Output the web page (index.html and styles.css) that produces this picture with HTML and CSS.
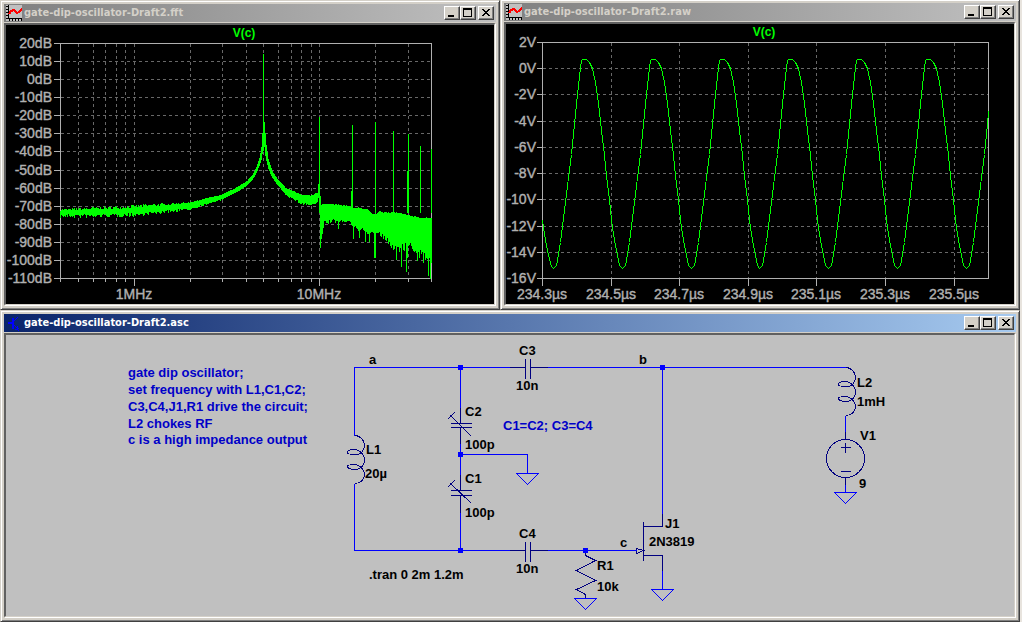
FILE: index.html
```
<!DOCTYPE html>
<html lang="en">
<head>
<meta charset="utf-8">
<title>gate-dip-oscillator-Draft2</title>
<link rel="stylesheet" href="styles.css">
</head>
<body>
<main class="workspace">
  <section class="window" aria-label="FFT">
    <header class="titlebar">
      <svg class="app-icon" viewBox="0 0 16 16" aria-hidden="true"><use href="#plot-icon"/></svg>
      <h2 class="title">gate-dip-oscillator-Draft2.fft</h2>
      <div class="controls">
        <button class="ctl" aria-label="Minimize"><svg viewBox="0 0 12 10"><use href="#min"/></svg></button>
        <button class="ctl" aria-label="Maximize"><svg viewBox="0 0 12 10"><use href="#max"/></svg></button>
        <button class="ctl close" aria-label="Close"><svg viewBox="0 0 12 10"><use href="#close"/></svg></button>
      </div>
    </header>
    <div class="client plot-area"><svg class="drawing" id="fft" viewBox="6 25 488 279" role="img" aria-label="Spectrum of V(c)"></svg></div>
  </section>

  <section class="window flush-top" aria-label="Waveform">
    <header class="titlebar">
      <svg class="app-icon" viewBox="0 0 16 16" aria-hidden="true"><use href="#plot-icon"/></svg>
      <h2 class="title">gate-dip-oscillator-Draft2.raw</h2>
      <div class="controls">
        <button class="ctl" aria-label="Minimize"><svg viewBox="0 0 12 10"><use href="#min"/></svg></button>
        <button class="ctl" aria-label="Maximize"><svg viewBox="0 0 12 10"><use href="#max"/></svg></button>
        <button class="ctl close" aria-label="Close"><svg viewBox="0 0 12 10"><use href="#close"/></svg></button>
      </div>
    </header>
    <div class="client plot-area"><svg class="drawing" id="wave" viewBox="506 24 508 280" role="img" aria-label="V(c) over time"></svg></div>
  </section>

  <section class="window wide" aria-label="Schematic">
    <header class="titlebar active">
      <svg class="app-icon" viewBox="0 0 16 16" aria-hidden="true">
        <path class="icon-blue" d="M2 7h4v2H2zM6 3h2v11H6zM8 5h1v1H8zM9 4h1v1H9zM10 3h1v1h-1zM11 2h1v1h-1zM8 10h1v1H8zM9 11h1v1H9zM10 12h1v1h-1zM11 11h1v2h1v1h-1v1H9v-1h2zM12 15h1v1h-1z"/>
      </svg>
      <h2 class="title">gate-dip-oscillator-Draft2.asc</h2>
      <div class="controls">
        <button class="ctl" aria-label="Minimize"><svg viewBox="0 0 12 10"><use href="#min"/></svg></button>
        <button class="ctl" aria-label="Maximize"><svg viewBox="0 0 12 10"><use href="#max"/></svg></button>
        <button class="ctl close" aria-label="Close"><svg viewBox="0 0 12 10"><use href="#close"/></svg></button>
      </div>
    </header>
    <div class="client schematic">
      <svg class="drawing" viewBox="6 335 1008 281" role="img" aria-label="Gate dip oscillator circuit">
        <defs>
          <path id="coil" d="M0 0C6 0 10 5 10 10C10 15 6 20 0 19C-5 19 -7 18 -7 17C-7 15 -4 14 0 14C5 14 10 19 10 24C10 29 7 34 0 34C-5 34 -7 32 -7 31C-7 29 -4 29 0 29C5 29 10 34 10 39C10 44 6 48 0 48"/>
          <path id="gnd" d="M-11 0H11L0 11Z"/>
        </defs>
        <g transform="translate(.5 .5)">
          <g class="part">
            <use href="#coil" x="354" y="435"/>
            <use href="#coil" x="845" y="367"/>
            <path d="M460 407V423M450 423H471M450 427H471M460 427V443M447 419L454 412M450 415L471 436"/>
            <path d="M460 474V490M450 490H471M450 495H471M460 495V512M447 487L454 480M450 483L471 503"/>
            <path d="M509 367H525M525 358V378M530 358V378M530 367H547"/>
            <path d="M509 550H525M525 541V561M530 541V561M530 550H547"/>
            <path d="M585 550V555L595 560L576 570L595 580L576 589L585 594V598"/>
            <path d="M643 521V560M643 526H662V513M643 555H662V570M636 548L643 550L636 553Z"/>
            <circle cx="845" cy="458" r="19"/>
            <path d="M845 431V439M845 477V484M840 447H850M845 442V452M840 471H850"/>
          </g>
          <g class="wire">
            <path d="M509 367H354V435M354 483V550H509M547 367H845M547 550H636"/>
            <path d="M460 367V407M460 443V474M460 512V550M460 454H527V473"/>
            <path d="M662 367V513M662 570V589M845 415V431M845 484V492"/>
            <use href="#gnd" x="527" y="473"/>
            <use href="#gnd" x="585" y="598"/>
            <use href="#gnd" x="662" y="589"/>
            <use href="#gnd" x="845" y="492"/>
          </g>
        </g>
        <path class="node" d="M458 365h5v5h-5zM458 452h5v5h-5zM458 548h5v5h-5zM583 548h5v5h-5zM660 365h5v5h-5z"/>
        <g class="label">
          <text x="369" y="364">a</text><text x="639" y="364">b</text><text x="620" y="547">c</text>
          <text x="519" y="355">C3</text><text x="516" y="390">10n</text>
          <text x="465" y="416">C2</text><text x="465" y="449">100p</text>
          <text x="465" y="483">C1</text><text x="465" y="517">100p</text>
          <text x="366" y="454">L1</text><text x="365" y="478">20µ</text>
          <text x="519" y="538">C4</text><text x="516" y="573">10n</text>
          <text x="597" y="570">R1</text><text x="597" y="591">10k</text>
          <text x="665" y="528">J1</text><text x="649" y="546">2N3819</text>
          <text x="857" y="387">L2</text><text x="857" y="406">1mH</text>
          <text x="860" y="440">V1</text><text x="859" y="488">9</text>
          <text x="369" y="579">.tran 0 2m 1.2m</text>
        </g>
        <g class="label comment">
          <text x="128" y="377">gate dip oscillator;</text>
          <text x="128" y="394">set frequency with L1,C1,C2;</text>
          <text x="128" y="411">C3,C4,J1,R1 drive the circuit;</text>
          <text x="128" y="428">L2 chokes RF</text>
          <text x="128" y="444">c is a high impedance output</text>
          <text x="503" y="430">C1=C2; C3=C4</text>
        </g>
      </svg>
    </div>
  </section>
</main>

<svg class="symbols" aria-hidden="true">
  <symbol id="plot-icon" viewBox="0 0 16 16">
    <path fill="#c0c0c0" d="M0 0h16v16H0z"/>
    <path fill="#000" d="M2 0h1v14H2zM2 13h14v1H2zM0 1h2v1H0zM0 4h2v1H0zM0 7h2v1H0zM0 10h2v1H0zM0 13h2v1H0zM3 14h1v2H3zM6 14h1v2H6zM9 14h1v2H9zM12 14h1v2h-1zM15 14h1v2h-1z"/>
    <path fill="none" stroke="#f00" stroke-width="2" d="M3 9L5 6L8 5L11 8L13 7L16 4"/>
  </symbol>
  <symbol id="min" viewBox="0 0 12 10"><path d="M2 7h6v2H2z"/></symbol>
  <symbol id="max" viewBox="0 0 12 10"><path fill-rule="evenodd" d="M1 0h9v9H1zM2 2v6h7V2z"/></symbol>
  <symbol id="close" viewBox="0 0 12 10"><path d="M2 1h2v1h1v1h2V2h1V1h2v1H9v1H8v1H7v1h1v1h1v1h1v1H8V7H7V6H5v1H4v1H2V7h1V6h1V5h1V4H4V3H3V2H2z"/></symbol>
</svg>
<script src="plots.js"></script>
</body>
</html>
```
FILE: styles.css
```
* { box-sizing: border-box; }
body { margin: 0; background: #e8e4de; font-family: "DejaVu Sans Condensed", "Noto Sans", sans-serif; }
.workspace { display: grid; grid-template-columns: 500fr 520fr; padding-right: 2px; border-bottom: 1px solid #808080; }
.wide { grid-column: 1 / -1; }
.window {
  background: #d4d0c8;
  border: 1px solid;
  border-color: #d4d0c8 #404040 #404040 #d4d0c8;
  box-shadow: inset 1px 1px #fff, inset -1px -1px #808080;
  padding: 3px;
}
.flush-top { border-top-width: 0; }
.titlebar {
  display: flex;
  align-items: center;
  gap: 2px;
  height: 18px;
  margin-bottom: 1px;
  padding: 0 2px;
  color: #d4d0c8;
  background: linear-gradient(to right, #808080, #c0c0c0);
}
.titlebar.active { color: #fff; background: linear-gradient(to right, #0a246a, #a6caf0); }
.app-icon { width: 16px; height: 16px; flex: none; shape-rendering: crispEdges; }
.icon-blue { fill: #00f; }
.title { flex: 1; margin: 0; font-size: 11px; line-height: 18px; font-weight: 700; white-space: nowrap; }
.controls { display: flex; }
.ctl {
  width: 16px;
  height: 14px;
  padding: 0;
  background: #d4d0c8;
  border: 1px solid;
  border-color: #fff #404040 #404040 #fff;
  box-shadow: inset -1px -1px #808080;
}
.ctl svg { display: block; width: 12px; height: 10px; margin: 1px; shape-rendering: crispEdges; }
.close { margin-left: 2px; }
.client {
  border: solid;
  border-width: 2px 1px 1px 2px;
  border-color: #606060 #d4d0c8 #d4d0c8 #606060;
  box-shadow: 1px 1px #fff;
  margin: 0 1px 1px 0;
}
.plot-area { background: #000; }
.schematic { background: #c0c0c0; }
.drawing { display: block; width: 100%; height: auto; font-family: "Liberation Sans", sans-serif; font-weight: 700; }
.wire, .part { fill: none; stroke-width: 1; shape-rendering: crispEdges; }
.wire { stroke: #00f; }
.part { stroke: #000080; }
.node { fill: #00f; shape-rendering: crispEdges; }
.label { font-size: 13px; fill: #000; }
.comment { fill: #0000c8; }
.grid { fill: none; stroke: #686868; stroke-dasharray: 3 3; shape-rendering: crispEdges; }
.axis { fill: none; stroke: #b0b0b0; shape-rendering: crispEdges; }
.trace { fill: none; stroke: #0f0; shape-rendering: crispEdges; }
.tick { font-size: 14px; font-weight: 400; fill: #b0b0b0; stroke: #b0b0b0; stroke-width: 0.4; }
.tick-y { text-anchor: end; }
.tick-x, .trace-name { text-anchor: middle; }
.trace-name { font-size: 12px; fill: #0f0; }
.symbols { position: absolute; width: 0; height: 0; }
```
FILE: plots.js
```
const NS = "http://www.w3.org/2000/svg";

function add(parent, tag, attrs, text) {
  const el = document.createElementNS(NS, tag);
  for (const key in attrs) el.setAttribute(key, attrs[key]);
  if (text) el.textContent = text;
  parent.appendChild(el);
  return el;
}

/* Draws the grid, frame, tick marks, tick labels and the trace name. */
function frame(svg, p) {
  const g = add(svg, "g", { transform: "translate(.5 .5)" });
  let grid = "", axis = `M${p.left} ${p.top}H${p.right}V${p.bottom}H${p.left}Z`;
  p.rows.forEach(([y, name]) => {
    if (y > p.top && y < p.bottom) grid += `M${p.left} ${y}H${p.right}`;
    axis += `M${p.left - p.tick} ${y}H${p.left}`;
    add(svg, "text", { class: "tick tick-y", x: p.labelX, y: y + 5 }, name);
  });
  p.cols.forEach(([x, name]) => {
    if (x > p.left && x < p.right) grid += `M${x} ${p.top}V${p.bottom}`;
    axis += `M${x} ${p.bottom}V${p.bottom + (name ? 7 : 3)}`;
    if (name) add(svg, "text", { class: "tick tick-x", x: x, y: 299 }, name);
  });
  add(g, "path", { class: "grid", d: grid });
  add(g, "path", { class: "axis", d: axis });
  add(svg, "text", { class: "trace-name", x: p.nameX, y: p.nameY }, "V(c)");
  return g;
}

const fft = document.getElementById("fft");
const fftG = frame(fft, {
  left: 60, top: 43, right: 431, bottom: 278, tick: 7, labelX: 52, nameX: 244, nameY: 37,
  rows: [43, 61, 79, 97, 115, 133, 151, 170, 188, 206, 224, 242, 260, 278].map((y, i) => [y, `${20 - i * 10}dB`]),
  cols: [[60], [78], [93], [105], [116], [125], [134, "1MHz"], [190], [222], [246], [263], [278], [291], [301], [311], [319, "10MHz"], [375], [408], [431]]
});

/* Noise band as [x, top, bottom, jitter above, jitter below]. */
const band = [
  [60, 210, 212, 2, 4], [93, 209, 212, 3, 4], [134, 207, 211, 3, 4], [160, 205, 209, 3, 3], [190, 202, 206, 1, 2],
  [222, 194, 197, 1, 1], [240, 185, 188, 1, 0], [246, 181, 184, 1, 0], [252, 174, 178, 0, 0], [256, 166, 171, 0, 0],
  [259, 157, 164, 0, 0], [261, 146, 158, 0, 0], [262, 132, 152, 0, 0], [263, 122, 145, 0, 0], [264, 121, 145, 0, 0],
  [265, 132, 154, 0, 0], [266, 144, 159, 0, 0], [268, 158, 167, 0, 0], [272, 170, 176, 0, 0], [278, 179, 184, 0, 1],
  [285, 187, 191, 1, 2], [291, 190, 195, 1, 2], [301, 194, 200, 1, 3], [311, 195, 202, 1, 2], [317, 192, 200, 1, 1],
  [318, 183, 196, 0, 0], [319, 180, 206, 0, 0], [320, 195, 243, 0, 4], [321, 204, 237, 0, 0], [322, 203, 232, 0, 0],
  [324, 203, 218, 0, 5], [338, 204, 216, 1, 5], [350, 206, 217, 1, 4], [352, 207, 222, 0, 3], [357, 207, 224, 1, 5],
  [367, 209, 228, 1, 4], [372, 213, 230, 0, 3], [376, 213, 231, 0, 0], [378, 211, 230, 1, 2], [385, 212, 233, 1, 6],
  [393, 212, 243, 1, 7], [402, 213, 240, 1, 10], [410, 215, 241, 1, 5], [418, 217, 246, 1, 9], [431, 218, 252, 2, 8]
];
const spikes = {
  338: 227, 353: 237, 359: 236, 365: 240, 369: 240, 374: 256, 375: 256, 391: 246, 393: 248, 396: 258, 401: 265,
  406: 270, 407: 256, 414: 250, 417: 259, 419: 256, 423: 261, 425: 258, 428: 274, 430: 277, 431: 261
};
let seed = 7;
const random = () => (seed = (seed * 16807) % 2147483647) / 2147483647;
let noise = "";
for (let x = 60, i = 0; x <= 431; x++) {
  while (i < band.length - 2 && band[i + 1][0] <= x) i++;
  const a = band[i], b = band[i + 1], t = (x - a[0]) / (b[0] - a[0]);
  const at = k => a[k] + (b[k] - a[k]) * t;
  const top = Math.round(at(1) - at(3) * random());
  const bottom = spikes[x] || Math.round(at(2) + at(4) * random());
  noise += `M${x} ${top}V${bottom + 1}`;
}
const harmonics = [[263, 53], [319, 116], [351, 190], [352, 124], [375, 121], [393, 130], [407, 170], [408, 133], [420, 145], [431, 148]];
harmonics.forEach(([x, y]) => { noise += `M${x} ${y}V${x < 300 ? 150 : 212}`; });
add(fftG, "path", { class: "trace", d: noise });

const wave = document.getElementById("wave");
const waveG = frame(wave, {
  left: 542, top: 42, right: 988, bottom: 278, tick: 6, labelX: 536, nameX: 764, nameY: 36,
  rows: [42, 68, 94, 121, 147, 173, 199, 226, 252, 278].map((y, i) => [y, `${2 - i * 2}V`]),
  cols: [542, 611, 679, 748, 816, 885, 954].map((x, i) => [x, `${(234.3 + i * 0.2).toFixed(1)}µs`])
});

/* One cycle of the output, measured from its trough. */
const cycle = [
  [0, 268], [3, 265], [5, 254], [7, 242], [9, 226], [12, 202], [15, 177], [18, 154], [21, 124], [24, 94], [27, 67],
  [28, 60], [29, 59], [33, 59], [36, 62], [39, 68], [42, 82], [45, 103], [48, 130], [51, 155], [53, 176], [56, 199],
  [58, 220], [61, 240], [64, 255], [66, 265]
];
const points = ["542,220", "545,240", "548,255", "551,266"];
for (let n = 0; n < 7; n++) {
  for (const [dx, y] of cycle) {
    const x = Math.round(553 + n * 68.8) + dx;
    if (x < 988) points.push(`${x},${y}`);
  }
}
points.push("988,111");
add(waveG, "polyline", { class: "trace", points: points.join(" ") });
```
